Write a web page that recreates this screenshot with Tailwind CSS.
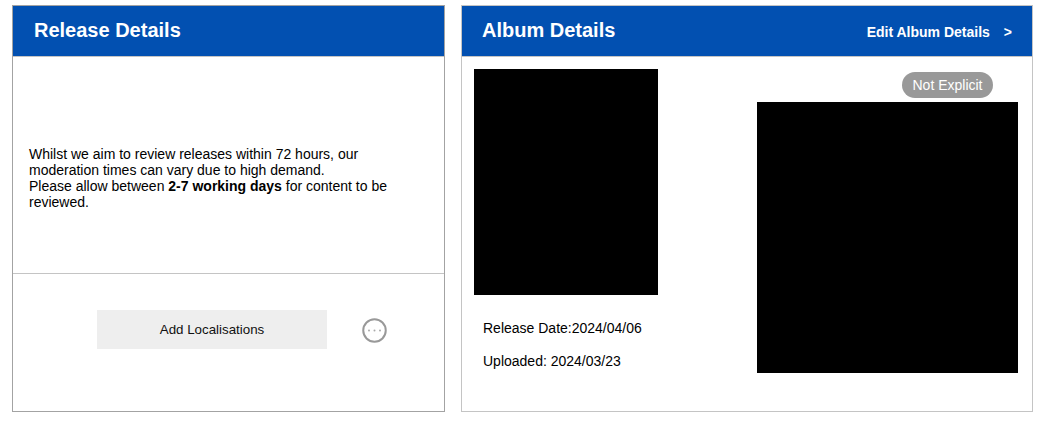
<!DOCTYPE html>
<html lang="en">
  <head>
    <meta charset="UTF-8" />
    <meta name="viewport" content="width=device-width, initial-scale=1.0" />
    <script src="https://cdn.jsdelivr.net/npm/@tailwindcss/browser@4"></script>
    <title>Release</title>
  </head>
  <body class="bg-white font-['Liberation_Sans',Arial,sans-serif] text-black">
    <div class="flex h-[425px] w-[1038px] gap-4 pl-3 pt-[5px]">
      <!-- release details -->
      <section class="flex h-[407px] w-[433px] flex-col border border-[#a3a3a3]">
        <h2 class="flex h-[50px] shrink-0 items-center bg-[#0250b1] pb-[2px] pl-[21px] text-xl font-bold text-white">
          Release Details
        </h2>
        <div class="flex h-[218px] shrink-0 items-center border-y border-[#c4c4c4] pl-4 pr-8 text-sm leading-4">
          <p class="pt-[26px]">
            Whilst we aim to review releases within 72 hours, our moderation times can vary due to high demand.<br />
            Please allow between <b>2-7 working days</b> for content to be reviewed.
          </p>
        </div>
        <div class="flex flex-1 items-start pl-[84px] pt-[36px]">
          <button class="h-[39px] w-[230px] bg-[#eeeeee] text-[13.33px] font-normal text-[#111]">Add Localisations</button>
          <svg class="ml-[35px] mt-[8px]" width="25" height="25" viewBox="0 0 25 25" fill="none">
            <circle cx="12.5" cy="12.5" r="11.25" stroke="#999999" stroke-width="2" />
            <circle cx="7" cy="12.5" r="1" fill="#aaaaaa" />
            <circle cx="12.5" cy="12.5" r="1" fill="#aaaaaa" />
            <circle cx="18" cy="12.5" r="1" fill="#aaaaaa" />
          </svg>
        </div>
      </section>

      <!-- album details -->
      <section class="flex h-[407px] w-[572px] flex-col border border-[#c4c4c4]">
        <div class="flex h-[50px] shrink-0 items-center justify-between bg-[#0250b1] pl-5 pr-5 text-white">
          <h2 class="pb-[2px] text-xl font-bold">Album Details</h2>
          <a class="mt-[1px] flex gap-[14px] text-sm font-bold"><span>Edit Album Details</span><span>&gt;</span></a>
        </div>
        <div class="flex flex-1 border-t border-[#c4c4c4] pl-3 pt-3">
          <div class="w-[184px] shrink-0">
            <div class="h-[226px] w-[184px] bg-black"></div>
            <p class="mt-[23px] pl-[9px] text-sm">Release Date:2024/04/06</p>
            <p class="mt-[13px] pl-[9px] text-sm">Uploaded: 2024/03/23</p>
          </div>
          <div class="ml-[99px] flex w-[261px] flex-col items-end">
            <span class="mr-[25px] mt-[3px] flex h-[26px] w-[91px] items-center justify-center rounded-full bg-[#999999] text-sm text-white">Not Explicit</span>
            <div class="mt-1 h-[271px] w-[261px] bg-black"></div>
          </div>
        </div>
      </section>
    </div>
  </body>
</html>
